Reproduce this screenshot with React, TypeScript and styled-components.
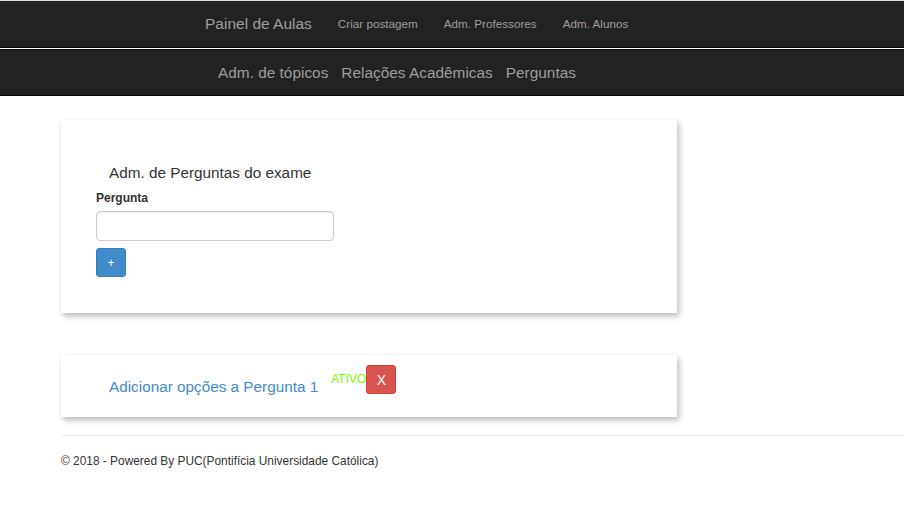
import React from "react";
import styled, { createGlobalStyle } from "styled-components";

const GlobalStyle = createGlobalStyle`
    body {
        margin: 0;
        background: #fff;
        font-family: "Liberation Sans", Arial, sans-serif;
        color: #333;
    }
`;

const NavBar = styled.nav<{ $top?: boolean }>`
    box-sizing: border-box;
    height: ${p => (p.$top ? "48px" : "47px")};
    background: #222;
    border-top: 1px solid ${p => (p.$top ? "#dcdcdc" : "#080808")};
    border-bottom: 1px solid #080808;
    margin-bottom: ${p => (p.$top ? "1px" : "0")};
    display: flex;
    align-items: center;
    padding-left: ${p => (p.$top ? "205px" : "218px")};
    gap: ${p => (p.$top ? "26px" : "13px")};
`;

const Brand = styled.a`
    color: #9d9d9d;
    font-size: 15.5px;
    text-decoration: none;
    margin-top: -1px;
`;

const NavLink = styled.a<{ $big?: boolean }>`
    color: #9d9d9d;
    font-size: ${p => (p.$big ? "15.4px" : "11.7px")};
    text-decoration: none;
    margin-top: ${p => (p.$big ? "1px" : "-2px")};
`;

const Main = styled.main`
    padding-left: 61px;
    display: flex;
    flex-direction: column;
`;

const Card = styled.section`
    box-sizing: border-box;
    width: 616px;
    background: #fff;
    box-shadow: 2px 3px 6px rgba(0, 0, 0, 0.28);
`;

const FormCard = styled(Card)`
    margin-top: 24px;
    height: 193px;
    padding: 43px 0 0 35px;
    display: flex;
    flex-direction: column;
    align-items: flex-start;
`;

const Heading = styled.h4`
    margin: 0 0 0 13px;
    font-size: 15.3px;
    font-weight: normal;
    line-height: 20px;
    color: #333;
`;

const Label = styled.label`
    margin-top: 7px;
    font-size: 12px;
    font-weight: bold;
    line-height: 16px;
`;

const Input = styled.input`
    box-sizing: border-box;
    margin-top: 5px;
    width: 238px;
    height: 30px;
    border: 1px solid #ccc;
    border-radius: 4px;
    box-shadow: inset 0 1px 1px rgba(0, 0, 0, 0.075);
    padding: 4px 8px;
`;

const Button = styled.button<{ $variant: "primary" | "danger" }>`
    box-sizing: border-box;
    width: 30px;
    height: 29px;
    padding: 0;
    border-radius: 3px;
    border: 1px solid ${p => (p.$variant === "primary" ? "#357ebd" : "#d43f3a")};
    background: ${p => (p.$variant === "primary" ? "#428bca" : "#d9534f")};
    color: #fff;
    font-family: "Liberation Sans", Arial, sans-serif;
    font-size: ${p => (p.$variant === "primary" ? "12px" : "14px")};
    cursor: pointer;
`;

const AddButton = styled(Button)`
    margin-top: 7px;
`;

const OptionCard = styled(Card)`
    margin-top: 42px;
    height: 62px;
    padding: 10px 0 0 48px;
    display: flex;
    align-items: flex-start;
`;

const OptionLink = styled.a`
    margin-top: 12px;
    font-size: 15.3px;
    line-height: 20px;
    color: #428bca;
    text-decoration: none;
`;

const Status = styled.span`
    margin: 7px 0 0 13px;
    font-size: 12px;
    line-height: 14px;
    color: #7cfc00;
`;

const Rule = styled.hr`
    margin: 18px 0 0 61px;
    border: 0;
    border-top: 1px solid #eee;
`;

const Footer = styled.footer`
    padding: 17px 0 0 61px;
    font-size: 11.9px;
    line-height: 16px;
    color: #333;
`;

export default function App() {
    return (
        <>
            <GlobalStyle />
            <NavBar $top>
                <Brand href="#">Painel de Aulas</Brand>
                <NavLink href="#">Criar postagem</NavLink>
                <NavLink href="#">Adm. Professores</NavLink>
                <NavLink href="#">Adm. Alunos</NavLink>
            </NavBar>
            <NavBar>
                <NavLink $big href="#">Adm. de tópicos</NavLink>
                <NavLink $big href="#">Relações Acadêmicas</NavLink>
                <NavLink $big href="#">Perguntas</NavLink>
            </NavBar>
            <Main>
                <FormCard>
                    <Heading>Adm. de Perguntas do exame</Heading>
                    <Label htmlFor="pergunta">Pergunta</Label>
                    <Input id="pergunta" type="text" />
                    <AddButton $variant="primary">+</AddButton>
                </FormCard>
                <OptionCard>
                    <OptionLink href="#">Adicionar opções a Pergunta 1</OptionLink>
                    <Status>ATIVO</Status>
                    <Button $variant="danger">X</Button>
                </OptionCard>
            </Main>
            <Rule />
            <Footer>© 2018 - Powered By PUC(Pontifícia Universidade Católica)</Footer>
        </>
    );
}
